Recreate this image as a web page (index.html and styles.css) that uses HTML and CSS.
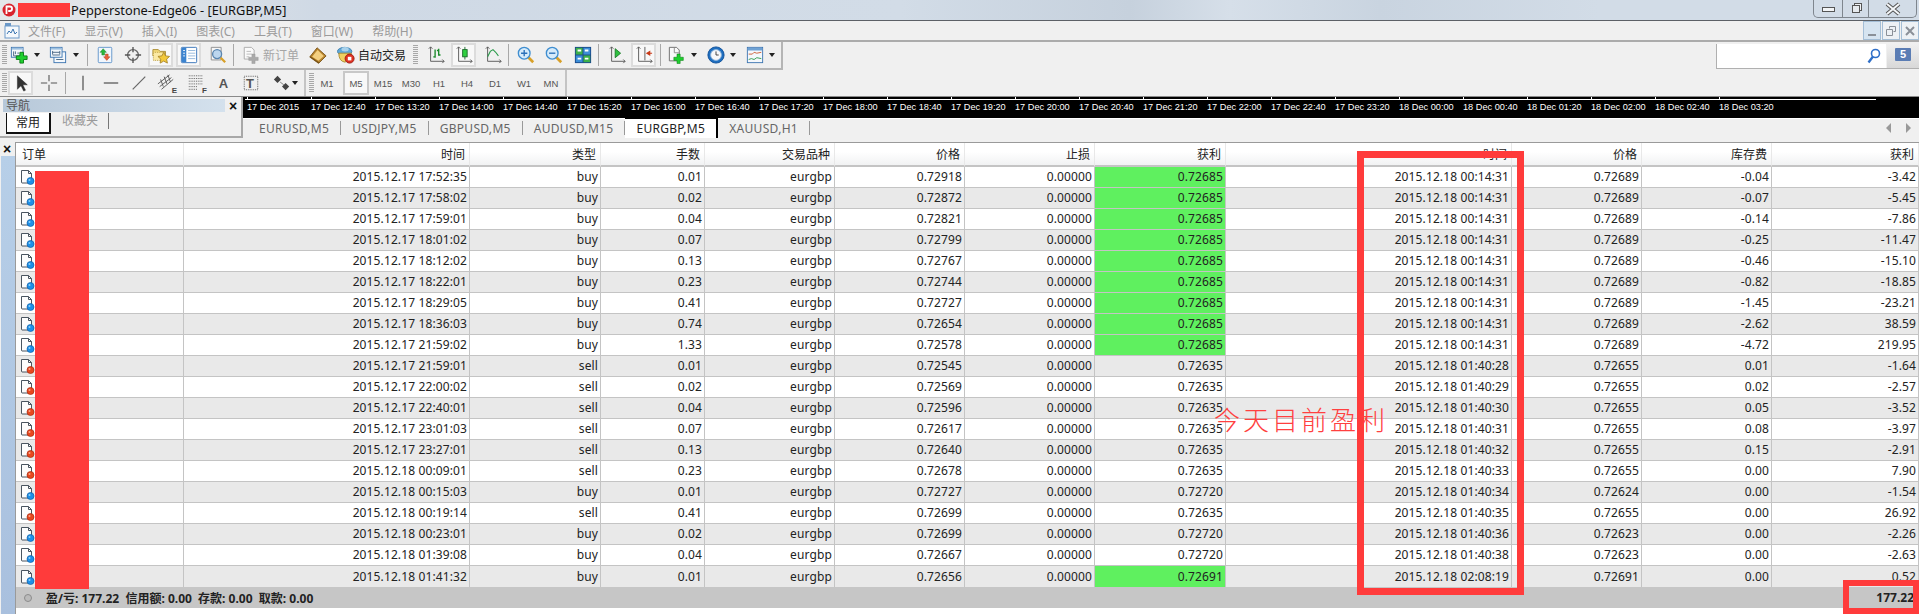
FILE: index.html
```html
<!DOCTYPE html>
<html lang="en">
<head>
    <meta charset="UTF-8">
    <meta name="viewport" content="width=device-width, initial-scale=1.0">
    <title>Pepperstone-Edge06 - [EURGBP,M5]</title>
    <link rel="stylesheet" href="styles.css">
</head>
<body>

    <svg class="sprites" xmlns="http://www.w3.org/2000/svg">
        <symbol id="i-newchart" viewBox="0 0 20 20">
            <rect x="1.500" y="1.500" width="13" height="11" fill="#f4f8fc" stroke="#3a74b0"/>
            <rect x="2" y="2" width="12" height="2" fill="#9cc0e0"/>
            <path d="M4 6v5h8M6 6v3M9 7v2" fill="none" stroke="#44617f"/>
            <path d="M11 7h4v4h4v4h-4v4h-4v-4H7v-4h4z" fill="#1fd02f" stroke="#0a7a14"/>
        </symbol>
        <symbol id="i-profile" viewBox="0 0 20 20">
            <rect x="5.500" y="6.500" width="13" height="12" fill="#f4f8fc" stroke="#3a74b0"/>
            <rect x="1.500" y="1.500" width="13" height="11" fill="#f4f8fc" stroke="#3a74b0"/>
            <rect x="2" y="2" width="12" height="2" fill="#9cc0e0"/>
            <path d="M4 7h8M4 10h8M8 15h8M4 5.500v4M12 5.500v4" fill="none" stroke="#44617f"/>
        </symbol>
        <symbol id="i-market" viewBox="0 0 20 20">
            <rect x="2.500" y="1.500" width="15" height="17" rx="1" fill="#f1f6fc" stroke="#5d92c9"/>
            <path d="M8 3l3.500 4H9.500v3h-3V7H4.500z" fill="#28b83a" stroke="#1a7a28" stroke-width=".5"/>
            <path d="M12 16l-3.500-4h2v-3h3v3h2z" fill="#e8603a" stroke="#a83a18" stroke-width=".5"/>
        </symbol>
        <symbol id="i-cross" viewBox="0 0 20 20">
            <circle cx="10" cy="10" r="6" fill="none" stroke="#666" stroke-width="1.500"/>
            <path d="M10 1v6M10 13v6M1 10h6M13 10h6" stroke="#555" stroke-width="1.500"/>
        </symbol>
        <symbol id="i-folder" viewBox="0 0 20 20">
            <path d="M1 4h6l2 2h6v5H1z" fill="#f3d97a" stroke="#a88a30"/>
            <path d="M1.500 7h13v9h-13z" fill="#fbe9a4" stroke="#b89a3a" stroke-dasharray="1 1"/>
            <path d="M13 7l2 4 4.500.6-3.300 3 .9 4.400-4.100-2.200-4 2.200.8-4.400-3.200-3 4.400-.6z" fill="#f3c93a" stroke="#a8862a"/>
        </symbol>
        <symbol id="i-term" viewBox="0 0 20 20">
            <rect x="1.500" y="1.500" width="17" height="17" rx="1" fill="#fff" stroke="#2f6db5"/>
            <rect x="2" y="2" width="5" height="16" fill="#3b84d0"/>
            <path d="M9 5h8M9 8h8M9 11h8M9 14h8" stroke="#8fb4da"/>
            <path d="M3.500 5h2M3.500 8h2M3.500 11h2" stroke="#fff"/>
        </symbol>
        <symbol id="i-tester" viewBox="0 0 20 20">
            <path d="M2.500 1.500h11v14h-11z" fill="#f6f6f6" stroke="#8a8a8a"/>
            <circle cx="9" cy="9" r="5" fill="#bcd6ee" stroke="#5a86b0" stroke-width="1.500"/>
            <path d="M13 13l5 5" stroke="#d8a028" stroke-width="2.500"/>
        </symbol>
        <symbol id="i-neworder" viewBox="0 0 20 20">
            <path d="M2.500 1.500h8l3 3v10h-11z" fill="#fafafa" stroke="#a8a8a8"/>
            <path d="M5 6h5M5 9h6M5 12h3" stroke="#b8b8b8"/>
            <path d="M11 9h3.500v3.500H18V16h-3.500v3.500H11V16H7.500v-3.500H11z" fill="#aaa" stroke="#999" stroke-width=".5"/>
        </symbol>
        <symbol id="i-gold" viewBox="0 0 20 20">
            <path d="M1 12L9 2l10 9-8 8z" fill="#b8842c" stroke="#7a5418"/>
            <path d="M3.500 12L9.500 4.500l7 6.500-6 5.500z" fill="#f3cf80"/>
            <path d="M1 12l10 7" stroke="#7a5418" stroke-width="1.500"/>
        </symbol>
        <symbol id="i-auto" viewBox="0 0 20 20">
            <ellipse cx="8.500" cy="6" rx="8" ry="4.500" fill="#5fa8d8" stroke="#3f7fae"/>
            <ellipse cx="9" cy="3.500" rx="4" ry="2.500" fill="#a9d2ec"/>
            <path d="M2 8q0 9 7 10l6-6 1-4z" fill="#f0d060" stroke="#a88a30"/>
            <circle cx="14" cy="14" r="5" fill="#e03020" stroke="#9a1a10"/>
            <rect x="12" y="12" width="4" height="4" fill="#fff"/>
        </symbol>
        <symbol id="i-bars" viewBox="0 0 20 20">
            <path d="M4 1v16h15M2 3l2-2 2 2M17 15l2 2-2 2" fill="none" stroke="#555"/>
            <path d="M9 4v9M7 12h2M13 3v7h2M13 5h-2" fill="none" stroke="#1a8a2a" stroke-width="1.500"/>
        </symbol>
        <symbol id="i-candle" viewBox="0 0 20 20">
            <path d="M4 1v16h15M2 3l2-2 2 2M17 15l2 2-2 2" fill="none" stroke="#555"/>
            <path d="M11 1v14" stroke="#1a6a2a"/>
            <rect x="8.500" y="4" width="5" height="8" fill="#2fd040" stroke="#1a6a2a"/>
        </symbol>
        <symbol id="i-line" viewBox="0 0 20 20">
            <path d="M4 1v16h15M2 3l2-2 2 2M17 15l2 2-2 2" fill="none" stroke="#555"/>
            <path d="M4 12l3-6 3-2 3 3 3 4" fill="none" stroke="#2a9a4a" stroke-width="1.200"/>
        </symbol>
        <symbol id="i-zoomin" viewBox="0 0 20 20">
            <path d="M12 12l6 6" stroke="#d8a028" stroke-width="3"/>
            <circle cx="8" cy="8" r="6.500" fill="#d6ebfa" stroke="#3f8ed0" stroke-width="1.500"/>
            <path d="M4.500 8h7M8 4.500v7" stroke="#2a70b8" stroke-width="1.500"/>
        </symbol>
        <symbol id="i-zoomout" viewBox="0 0 20 20">
            <path d="M12 12l6 6" stroke="#d8a028" stroke-width="3"/>
            <circle cx="8" cy="8" r="6.500" fill="#d6ebfa" stroke="#3f8ed0" stroke-width="1.500"/>
            <path d="M4.500 8h7" stroke="#2a70b8" stroke-width="1.500"/>
        </symbol>
        <symbol id="i-tile" viewBox="0 0 20 20">
            <rect x="1" y="1" width="18" height="18" fill="#1a4a8a"/>
            <rect x="2" y="2" width="7.500" height="7.500" fill="#3cb04a"/>
            <rect x="10.500" y="2" width="7.500" height="7.500" fill="#3c8ed8"/>
            <rect x="2" y="10.500" width="7.500" height="7.500" fill="#3c8ed8"/>
            <rect x="10.500" y="10.500" width="7.500" height="7.500" fill="#3cb04a"/>
            <path d="M4 5h4M12 5h4M4 14h4M12 14h4" stroke="#fff" stroke-width="2"/>
        </symbol>
        <symbol id="i-scroll" viewBox="0 0 20 20">
            <path d="M4 1v16h15M2 3l2-2 2 2M17 15l2 2-2 2" fill="none" stroke="#555"/>
            <path d="M8 3l6 5-6 5z" fill="#2fc040" stroke="#1a7a28"/>
        </symbol>
        <symbol id="i-shift" viewBox="0 0 20 20">
            <path d="M4 1v16h15M2 3l2-2 2 2M17 15l2 2-2 2M11 1v15" fill="none" stroke="#555"/>
            <path d="M12 8l5-3v2.500h2v1h-2V11z" fill="#c83a18"/>
        </symbol>
        <symbol id="i-template" viewBox="0 0 20 20">
            <path d="M1.500 1.500h8l3 3v12h-11z" fill="#fafafa" stroke="#666"/>
            <path d="M7 1.500v6h5" fill="none" stroke="#888"/>
            <path d="M10 9h3.500v3.500H17V16h-3.500v3.500H10V16H6.500v-3.500H10z" fill="#1fd02f" stroke="#0a7a14" stroke-width=".6"/>
        </symbol>
        <symbol id="i-clock" viewBox="0 0 20 20">
            <circle cx="10" cy="10" r="9" fill="#1f6fc0" stroke="#0f4f98"/>
            <circle cx="10" cy="10" r="6" fill="#f6f8fa" stroke="#8fb4da"/>
            <path d="M10 6v4h3" fill="none" stroke="#333"/>
        </symbol>
        <symbol id="i-ind" viewBox="0 0 20 20">
            <rect x="1.500" y="1.500" width="17" height="17" fill="#f4f8fc" stroke="#3a74b0"/>
            <rect x="2" y="2" width="16" height="3" fill="#6fa2d4"/>
            <path d="M3 9h4l2-2 3 1 5-1" fill="none" stroke="#c85a30"/>
            <path d="M3 15l3-1 3 1 3-2 5 1" fill="none" stroke="#2a9a4a"/>
        </symbol>
        <symbol id="i-arrow" viewBox="0 0 20 20">
            <path d="M6 2v15l4-4 3 6 2-1-3-6h5z" fill="#333" stroke="#222" stroke-width=".5"/>
        </symbol>
        <symbol id="i-plus" viewBox="0 0 20 20">
            <path d="M10 1v7M10 12v7M1 10h7M12 10h7" stroke="#555" stroke-width="1.200"/>
        </symbol>
        <symbol id="i-vline" viewBox="0 0 20 20"><path d="M10 2v16" stroke="#555" stroke-width="1.400"/></symbol>
        <symbol id="i-hline" viewBox="0 0 20 20"><path d="M2 10h16" stroke="#555" stroke-width="1.400"/></symbol>
        <symbol id="i-tline" viewBox="0 0 20 20"><path d="M3 17L17 3" stroke="#666" stroke-width="1.300"/></symbol>
        <symbol id="i-fibo" viewBox="0 0 20 20">
            <path d="M1 11L14 1M3 14L16 4M5 17L18 6M4 6l3 8M8 3l3 8M12 1l3 8" fill="none" stroke="#555"/>
        </symbol>
        <symbol id="i-fan" viewBox="0 0 20 20">
            <path d="M2 2h16M2 5h16M2 8h16M2 11h16M2 14h10M2 17h10" stroke="#555" stroke-dasharray="1 1"/>
        </symbol>
        <symbol id="i-label" viewBox="0 0 20 20">
            <rect x="2.500" y="2.500" width="15" height="15" fill="none" stroke="#555" stroke-dasharray="1 1"/>
        </symbol>
        <symbol id="i-arrows" viewBox="0 0 20 20">
            <path d="M5 2l4 4-4 4-4-4zM14 10l4 4-4 4-4-4z" fill="#444"/>
            <path d="M8 9l4 3" stroke="#777"/>
        </symbol>
        <symbol id="i-buy" viewBox="0 0 16 16">
            <path d="M2.500 1.500h7l3 3v8q0 1.500-1.500 1.500h-8q-.5 0-.5-1z" fill="#fdfdfd" stroke="#4a5560"/>
            <path d="M9.500 1.500v3h3" fill="none" stroke="#4a5560"/>
            <circle cx="11.500" cy="12" r="3.500" fill="#1e90e8" stroke="#0f5fa8" stroke-width=".7"/>
            <circle cx="10.500" cy="11" r="1" fill="#8fd0f8"/>
        </symbol>
        <symbol id="i-sell" viewBox="0 0 16 16">
            <path d="M2.500 1.500h7l3 3v8q0 1.500-1.500 1.500h-8q-.5 0-.5-1z" fill="#fdfdfd" stroke="#4a5560"/>
            <path d="M9.500 1.500v3h3" fill="none" stroke="#4a5560"/>
            <circle cx="11.500" cy="12" r="3.500" fill="#e8481e" stroke="#a82a0f" stroke-width=".7"/>
            <circle cx="10.500" cy="11" r="1" fill="#f8a88f"/>
        </symbol>
    </svg>

    <header class="titlebar">
        <svg class="logo" viewBox="0 0 14 14"><circle cx="7" cy="7" r="6.500" fill="#d9232e"/><path d="M4.500 11V3.500h3.300a2.200 2.200 0 0 1 0 4.500H6.200" fill="none" stroke="#fff" stroke-width="1.800"/></svg>
        <span class="title-mask"></span>
        <span class="title-text">Pepperstone-Edge06 - [EURGBP,M5]</span>
        <div class="win-buttons">
            <span class="win-btn win-min"><i></i></span>
            <span class="win-btn win-restore"><i></i></span>
            <span class="win-btn win-close">
                <svg viewBox="0 0 20 14" width="20" height="14"><path d="M4 2l12 10M16 2L4 12" stroke="#555" stroke-width="4"/><path d="M4 2l12 10M16 2L4 12" stroke="#f4f6f8" stroke-width="2"/></svg>
            </span>
        </div>
    </header>

    <nav class="menubar">
        <svg class="menu-icon" viewBox="0 0 16 16"><rect x="1" y="3" width="14" height="12" fill="#f4f8fc" stroke="#6a98c8"/><rect x="1" y="0" width="6" height="3" fill="#6a98c8"/><path d="M3 11l2-3 2 2 2-4 2 5 2-2" fill="none" stroke="#3a74b0"/></svg>
        <span>文件(F)</span>
        <span>显示(V)</span>
        <span>插入(I)</span>
        <span>图表(C)</span>
        <span>工具(T)</span>
        <span>窗口(W)</span>
        <span>帮助(H)</span>
        <div class="mdi-buttons">
            <span class="mdi-btn"><svg viewBox="0 0 12 12" width="12" height="12"><path d="M2 10h8" stroke="#8a9098" stroke-width="2"/></svg></span>
            <span class="mdi-btn"><svg viewBox="0 0 12 12" width="12" height="12"><path d="M4.500 3.500V1.500h6v5h-2M1.500 4.500h6v6h-6z" fill="none" stroke="#8a9098"/></svg></span>
            <span class="mdi-btn"><svg viewBox="0 0 12 12" width="12" height="12"><path d="M2 2l8 8M10 2l-8 8" stroke="#8a9098" stroke-width="2"/></svg></span>
        </div>
    </nav>

    <div class="toolbars">
        <div class="toolbar-rows">
            <div class="toolbar toolbar-main">
                <span class="grip ml2"></span>
                <span class="tool w22 ml1"><svg class="ico"><use href="#i-newchart"/></svg></span>
                <span class="caret ml4"></span>
                <span class="tool w22 ml7"><svg class="ico"><use href="#i-profile"/></svg></span>
                <span class="caret ml4"></span>
                <span class="sep ml8"></span>
                <span class="tool ml4"><svg class="ico"><use href="#i-market"/></svg></span>
                <span class="tool ml3"><svg class="ico"><use href="#i-cross"/></svg></span>
                <span class="tool hot ml3"><svg class="ico"><use href="#i-folder"/></svg></span>
                <span class="tool hot ml3"><svg class="ico"><use href="#i-term"/></svg></span>
                <span class="tool ml4"><svg class="ico"><use href="#i-tester"/></svg></span>
                <span class="sep ml3"></span>
                <span class="tool-text disabled ml8"><svg class="ico"><use href="#i-neworder"/></svg>新订单</span>
                <span class="tool ml6"><svg class="ico"><use href="#i-gold"/></svg></span>
                <span class="tool-text ml7"><svg class="ico"><use href="#i-auto"/></svg>自动交易</span>
                <span class="grip ml7"></span>
                <span class="tool ml5"><svg class="ico"><use href="#i-bars"/></svg></span>
                <span class="tool hot ml3"><svg class="ico"><use href="#i-candle"/></svg></span>
                <span class="tool ml4"><svg class="ico"><use href="#i-line"/></svg></span>
                <span class="sep ml3"></span>
                <span class="tool ml4"><svg class="ico"><use href="#i-zoomin"/></svg></span>
                <span class="tool ml3"><svg class="ico"><use href="#i-zoomout"/></svg></span>
                <span class="tool ml4"><svg class="ico"><use href="#i-tile"/></svg></span>
                <span class="sep ml3"></span>
                <span class="tool ml5"><svg class="ico"><use href="#i-scroll"/></svg></span>
                <span class="tool hot ml2"><svg class="ico"><use href="#i-shift"/></svg></span>
                <span class="sep ml4"></span>
                <span class="tool w22 ml5"><svg class="ico"><use href="#i-template"/></svg></span>
                <span class="caret ml3"></span>
                <span class="tool w22 ml8"><svg class="ico"><use href="#i-clock"/></svg></span>
                <span class="caret ml3"></span>
                <span class="tool w22 ml8"><svg class="ico"><use href="#i-ind"/></svg></span>
                <span class="caret ml3"></span>
            </div>
            <div class="toolbar toolbar-draw">
                <span class="grip ml2"></span>
                <span class="tool hot ml1"><svg class="ico"><use href="#i-arrow"/></svg></span>
                <span class="tool ml3"><svg class="ico"><use href="#i-plus"/></svg></span>
                <span class="sep ml4"></span>
                <span class="tool ml4"><svg class="ico"><use href="#i-vline"/></svg></span>
                <span class="tool ml3"><svg class="ico"><use href="#i-hline"/></svg></span>
                <span class="tool ml3"><svg class="ico"><use href="#i-tline"/></svg></span>
                <span class="tool sub ml2"><svg class="ico"><use href="#i-fibo"/></svg><b>E</b></span>
                <span class="tool sub ml5"><svg class="ico"><use href="#i-fan"/></svg><b>F</b></span>
                <span class="tool glyph ml3">A</span>
                <span class="tool glyph boxed ml2"><svg class="ico"><use href="#i-label"/></svg><b>T</b></span>
                <span class="tool w20 ml9"><svg class="ico"><use href="#i-arrows"/></svg></span>
                <span class="caret"></span>
                <span class="bar-end ml6"></span>
                <span class="grip ml3"></span>
                <span class="tf">M1</span>
                <span class="tf hot ml3">M5</span>
                <span class="tf ml1">M15</span>
                <span class="tf ml2">M30</span>
                <span class="tf ml2">H1</span>
                <span class="tf ml2">H4</span>
                <span class="tf ml2">D1</span>
                <span class="tf ml3">W1</span>
                <span class="tf ml1">MN</span>
            </div>
        </div>
        <div class="search-area">
            <div class="search-box">
                <svg viewBox="0 0 14 16" width="14" height="16"><circle cx="8.500" cy="5.500" r="4" fill="#fff" stroke="#2f6fc8" stroke-width="1.600"/><path d="M6 8.500l-4.500 6" stroke="#2f6fc8" stroke-width="2.400"/></svg>
            </div>
            <div class="notify"><span class="notify-count">5</span></div>
        </div>
    </div>

    <div class="top-row">
        <aside class="nav-panel">
            <div class="nav-head">
                <span class="nav-title">导航</span>
                <span class="close-x">×</span>
            </div>
            <div class="nav-tabs">
                <span class="nav-tab active">常用</span>
                <span class="nav-tab">收藏夹</span>
            </div>
        </aside>
        <div class="chart-col">
            <div class="axis">
                <div class="axis-line"></div>
                <div class="axis-labels">
                    <span>17 Dec 2015</span><span>17 Dec 12:40</span><span>17 Dec 13:20</span><span>17 Dec 14:00</span><span>17 Dec 14:40</span><span>17 Dec 15:20</span><span>17 Dec 16:00</span><span>17 Dec 16:40</span><span>17 Dec 17:20</span><span>17 Dec 18:00</span><span>17 Dec 18:40</span><span>17 Dec 19:20</span><span>17 Dec 20:00</span><span>17 Dec 20:40</span><span>17 Dec 21:20</span><span>17 Dec 22:00</span><span>17 Dec 22:40</span><span>17 Dec 23:20</span><span>18 Dec 00:00</span><span>18 Dec 00:40</span><span>18 Dec 01:20</span><span>18 Dec 02:00</span><span>18 Dec 02:40</span><span>18 Dec 03:20</span>
                </div>
            </div>
            <div class="chart-tabs">
                <span class="chart-tab">EURUSD,M5</span>
                <span class="chart-tab">USDJPY,M5</span>
                <span class="chart-tab">GBPUSD,M5</span>
                <span class="chart-tab">AUDUSD,M15</span>
                <span class="chart-tab active">EURGBP,M5</span>
                <span class="chart-tab">XAUUSD,H1</span>
                <span class="tab-arrows">
                    <svg viewBox="0 0 6 10" width="6" height="10"><path d="M5 0v10L0 5z" fill="#999"/></svg>
                    <svg viewBox="0 0 6 10" width="6" height="10"><path d="M1 0v10l5-5z" fill="#999"/></svg>
                </span>
            </div>
        </div>
    </div>

    <section class="terminal">
        <div class="term-side">
            <span class="close-x">×</span>
            <div class="term-strip"></div>
        </div>
        <div class="term-main">
            <table class="orders">
                <colgroup>
                    <col class="c-order"><col class="c-time"><col class="c-a"><col class="c-b"><col class="c-c"><col class="c-c"><col class="c-c"><col class="c-a"><col class="c-time"><col class="c-c"><col class="c-c"><col>
                </colgroup>
                <thead>
                    <tr><th class="left">订单</th><th>时间</th><th>类型</th><th>手数</th><th>交易品种</th><th>价格</th><th>止损</th><th>获利</th><th>时间</th><th>价格</th><th>库存费</th><th>获利</th></tr>
                </thead>
                <tbody>
                    <tr><td class="left"><svg class="row-ico"><use href="#i-buy"/></svg></td><td>2015.12.17 17:52:35</td><td>buy</td><td>0.01</td><td>eurgbp</td><td>0.72918</td><td>0.00000</td><td class="hit">0.72685</td><td>2015.12.18 00:14:31</td><td>0.72689</td><td>-0.04</td><td>-3.42</td></tr>
                    <tr><td class="left"><svg class="row-ico"><use href="#i-buy"/></svg></td><td>2015.12.17 17:58:02</td><td>buy</td><td>0.02</td><td>eurgbp</td><td>0.72872</td><td>0.00000</td><td class="hit">0.72685</td><td>2015.12.18 00:14:31</td><td>0.72689</td><td>-0.07</td><td>-5.45</td></tr>
                    <tr><td class="left"><svg class="row-ico"><use href="#i-buy"/></svg></td><td>2015.12.17 17:59:01</td><td>buy</td><td>0.04</td><td>eurgbp</td><td>0.72821</td><td>0.00000</td><td class="hit">0.72685</td><td>2015.12.18 00:14:31</td><td>0.72689</td><td>-0.14</td><td>-7.86</td></tr>
                    <tr><td class="left"><svg class="row-ico"><use href="#i-buy"/></svg></td><td>2015.12.17 18:01:02</td><td>buy</td><td>0.07</td><td>eurgbp</td><td>0.72799</td><td>0.00000</td><td class="hit">0.72685</td><td>2015.12.18 00:14:31</td><td>0.72689</td><td>-0.25</td><td>-11.47</td></tr>
                    <tr><td class="left"><svg class="row-ico"><use href="#i-buy"/></svg></td><td>2015.12.17 18:12:02</td><td>buy</td><td>0.13</td><td>eurgbp</td><td>0.72767</td><td>0.00000</td><td class="hit">0.72685</td><td>2015.12.18 00:14:31</td><td>0.72689</td><td>-0.46</td><td>-15.10</td></tr>
                    <tr><td class="left"><svg class="row-ico"><use href="#i-buy"/></svg></td><td>2015.12.17 18:22:01</td><td>buy</td><td>0.23</td><td>eurgbp</td><td>0.72744</td><td>0.00000</td><td class="hit">0.72685</td><td>2015.12.18 00:14:31</td><td>0.72689</td><td>-0.82</td><td>-18.85</td></tr>
                    <tr><td class="left"><svg class="row-ico"><use href="#i-buy"/></svg></td><td>2015.12.17 18:29:05</td><td>buy</td><td>0.41</td><td>eurgbp</td><td>0.72727</td><td>0.00000</td><td class="hit">0.72685</td><td>2015.12.18 00:14:31</td><td>0.72689</td><td>-1.45</td><td>-23.21</td></tr>
                    <tr><td class="left"><svg class="row-ico"><use href="#i-buy"/></svg></td><td>2015.12.17 18:36:03</td><td>buy</td><td>0.74</td><td>eurgbp</td><td>0.72654</td><td>0.00000</td><td class="hit">0.72685</td><td>2015.12.18 00:14:31</td><td>0.72689</td><td>-2.62</td><td>38.59</td></tr>
                    <tr><td class="left"><svg class="row-ico"><use href="#i-buy"/></svg></td><td>2015.12.17 21:59:02</td><td>buy</td><td>1.33</td><td>eurgbp</td><td>0.72578</td><td>0.00000</td><td class="hit">0.72685</td><td>2015.12.18 00:14:31</td><td>0.72689</td><td>-4.72</td><td>219.95</td></tr>
                    <tr><td class="left"><svg class="row-ico"><use href="#i-sell"/></svg></td><td>2015.12.17 21:59:01</td><td>sell</td><td>0.01</td><td>eurgbp</td><td>0.72545</td><td>0.00000</td><td>0.72635</td><td>2015.12.18 01:40:28</td><td>0.72655</td><td>0.01</td><td>-1.64</td></tr>
                    <tr><td class="left"><svg class="row-ico"><use href="#i-sell"/></svg></td><td>2015.12.17 22:00:02</td><td>sell</td><td>0.02</td><td>eurgbp</td><td>0.72569</td><td>0.00000</td><td>0.72635</td><td>2015.12.18 01:40:29</td><td>0.72655</td><td>0.02</td><td>-2.57</td></tr>
                    <tr><td class="left"><svg class="row-ico"><use href="#i-sell"/></svg></td><td>2015.12.17 22:40:01</td><td>sell</td><td>0.04</td><td>eurgbp</td><td>0.72596</td><td>0.00000</td><td>0.72635</td><td>2015.12.18 01:40:30</td><td>0.72655</td><td>0.05</td><td>-3.52</td></tr>
                    <tr><td class="left"><svg class="row-ico"><use href="#i-sell"/></svg></td><td>2015.12.17 23:01:03</td><td>sell</td><td>0.07</td><td>eurgbp</td><td>0.72617</td><td>0.00000</td><td>0.72635</td><td>2015.12.18 01:40:31</td><td>0.72655</td><td>0.08</td><td>-3.97</td></tr>
                    <tr><td class="left"><svg class="row-ico"><use href="#i-sell"/></svg></td><td>2015.12.17 23:27:01</td><td>sell</td><td>0.13</td><td>eurgbp</td><td>0.72640</td><td>0.00000</td><td>0.72635</td><td>2015.12.18 01:40:32</td><td>0.72655</td><td>0.15</td><td>-2.91</td></tr>
                    <tr><td class="left"><svg class="row-ico"><use href="#i-sell"/></svg></td><td>2015.12.18 00:09:01</td><td>sell</td><td>0.23</td><td>eurgbp</td><td>0.72678</td><td>0.00000</td><td>0.72635</td><td>2015.12.18 01:40:33</td><td>0.72655</td><td>0.00</td><td>7.90</td></tr>
                    <tr><td class="left"><svg class="row-ico"><use href="#i-buy"/></svg></td><td>2015.12.18 00:15:03</td><td>buy</td><td>0.01</td><td>eurgbp</td><td>0.72727</td><td>0.00000</td><td>0.72720</td><td>2015.12.18 01:40:34</td><td>0.72624</td><td>0.00</td><td>-1.54</td></tr>
                    <tr><td class="left"><svg class="row-ico"><use href="#i-sell"/></svg></td><td>2015.12.18 00:19:14</td><td>sell</td><td>0.41</td><td>eurgbp</td><td>0.72699</td><td>0.00000</td><td>0.72635</td><td>2015.12.18 01:40:35</td><td>0.72655</td><td>0.00</td><td>26.92</td></tr>
                    <tr><td class="left"><svg class="row-ico"><use href="#i-buy"/></svg></td><td>2015.12.18 00:23:01</td><td>buy</td><td>0.02</td><td>eurgbp</td><td>0.72699</td><td>0.00000</td><td>0.72720</td><td>2015.12.18 01:40:36</td><td>0.72623</td><td>0.00</td><td>-2.26</td></tr>
                    <tr><td class="left"><svg class="row-ico"><use href="#i-buy"/></svg></td><td>2015.12.18 01:39:08</td><td>buy</td><td>0.04</td><td>eurgbp</td><td>0.72667</td><td>0.00000</td><td>0.72720</td><td>2015.12.18 01:40:38</td><td>0.72623</td><td>0.00</td><td>-2.63</td></tr>
                    <tr><td class="left"><svg class="row-ico"><use href="#i-buy"/></svg></td><td>2015.12.18 01:41:32</td><td>buy</td><td>0.01</td><td>eurgbp</td><td>0.72656</td><td>0.00000</td><td class="hit">0.72691</td><td>2015.12.18 02:08:19</td><td>0.72691</td><td>0.00</td><td>0.52</td></tr>
                </tbody>
            </table>
            <div class="summary">
                <span class="summary-dot"></span>
                <span class="summary-text">盈/亏: 177.22&nbsp;&nbsp;信用额: 0.00&nbsp;&nbsp;存款: 0.00&nbsp;&nbsp;取款: 0.00</span>
                <span class="summary-total">177.22</span>
            </div>
        </div>
    </section>

    <!-- markup drawn over the screenshot -->
    <div class="mask-account"></div>
    <div class="mark-times"></div>
    <div class="mark-total"></div>
    <div class="mark-note">今天目前盈利</div>

</body>
</html>
```

FILE: styles.css
```css
html, body {
    margin: 0;
    padding: 0;
}

body {
    position: relative;
    width: 1919px;
    height: 614px;
    overflow: hidden;
    background: #f0f0f0;
    color: #222;
    font-family: "Noto Sans", "Noto Sans CJK SC", sans-serif;
    font-size: 12px;
}

.sprites {
    display: none;
}

/* title bar */
.titlebar {
    display: flex;
    align-items: center;
    height: 20px;
    border-bottom: 1px solid #5c6066;
    background: linear-gradient(90deg, #e4e7ea 0, #dfe3e7 150px, #cfd9e5 320px, #d2dce7 900px, #c6d1dd 1130px, #d6dfe9 1230px, #c9d4e0 1380px, #d2dce7 1600px, #d2dce7 100%);
}

.logo {
    width: 14px;
    height: 14px;
    margin-left: 2px;
}

.title-mask {
    width: 52px;
    height: 14px;
    margin-left: 2px;
    background: #ff3b3b;
}

.title-text {
    margin-left: 1px;
    font-size: 12.800px;
    color: #111;
}

.win-buttons {
    display: flex;
    align-self: flex-start;
    height: 17px;
    margin-left: auto;
    margin-right: 2px;
    border: 1px solid #7f868e;
    border-top: none;
    border-radius: 0 0 5px 5px;
}

.win-btn {
    display: flex;
    align-items: center;
    justify-content: center;
    border-right: 1px solid #7f868e;
}

.win-min {
    width: 28px;
}

.win-min i {
    display: block;
    width: 11px;
    height: 3px;
    margin-top: 2px;
    border: 1px solid #555;
    background: #f2f4f6;
}

.win-restore {
    width: 25px;
}

.win-restore i {
    display: block;
    width: 6px;
    height: 6px;
    border: 1px solid #555;
    box-shadow: 2px -2px 0 -1px #f0f2f4, 2px -2px 0 0 #555;
    background: #e6eaee;
}

.win-close {
    width: 47px;
    border-right: none;
}

/* menu */
.menubar {
    display: flex;
    align-items: center;
    gap: 19px;
    height: 19px;
    border-bottom: 2px solid #ababab;
    color: #9b9b9b;
}

.menu-icon {
    width: 16px;
    height: 16px;
    margin: 0 -11px 0 4px;
}

.mdi-buttons {
    display: flex;
    gap: 1px;
    margin-left: auto;
}

.mdi-btn {
    display: flex;
    align-items: center;
    justify-content: center;
    width: 16px;
    height: 17px;
    border: 1px solid #a4bed6;
    background: #d6e4f0;
}

.mdi-btn + .mdi-btn {
    background: #edf1f5;
}

/* toolbars */
.toolbars {
    display: flex;
    justify-content: space-between;
    height: 54px;
    border-bottom: 1px solid #8a8a8a;
}

.toolbar {
    display: flex;
    align-items: center;
}

.toolbar-main {
    width: 781px;
    height: 26px;
    border-right: 2px solid #b5b5b5;
    border-bottom: 2px solid #b5b5b5;
}

.toolbar-draw {
    width: 565px;
    height: 26px;
    border-right: 2px solid #c4c4c4;
}

.grip {
    flex: none;
    width: 5px;
    height: 20px;
    background: repeating-linear-gradient(180deg, #a8a8a8 0, #a8a8a8 1px, transparent 1px, transparent 2px);
}

.tool {
    position: relative;
    flex: none;
    display: flex;
    align-items: center;
    justify-content: center;
    box-sizing: border-box;
    width: 25px;
    height: 24px;
}

.w22 {
    width: 22px;
}

.w20 {
    width: 20px;
}

.ico {
    flex: none;
    width: 18px;
    height: 18px;
}

.hot {
    border: 2px solid #dcdcdc;
    background: #f8f8f8;
}

.caret {
    flex: none;
    width: 0;
    height: 0;
    box-sizing: content-box;
    border-top: 4px solid #222;
    border-left: 3px solid transparent;
    border-right: 3px solid transparent;
}

.sep {
    flex: none;
    width: 1px;
    height: 22px;
    background: #a8a8a8;
}

.bar-end {
    flex: none;
    width: 2px;
    height: 26px;
    background: #c4c4c4;
}

.tool-text {
    flex: none;
    display: flex;
    align-items: center;
    gap: 3px;
    font-size: 12px;
    color: #222;
}

.tool-text.disabled {
    color: #a5a5a5;
}

.sub b {
    position: absolute;
    right: 1px;
    bottom: 0;
    font: bold 8px "Liberation Sans", sans-serif;
    color: #444;
}

.glyph {
    font: bold 13px "Liberation Sans", sans-serif;
    color: #555;
}

.boxed b {
    position: absolute;
    left: 8px;
    top: 5px;
    font-size: 13px;
}

.tf {
    flex: none;
    display: flex;
    align-items: center;
    justify-content: center;
    box-sizing: border-box;
    width: 26px;
    height: 24px;
    font: 9.500px "Liberation Sans", sans-serif;
    color: #555;
}

.tf.hot {
    border-color: #c8c8c8;
}

.ml1 { margin-left: 1px; }
.ml2 { margin-left: 2px; }
.ml3 { margin-left: 3px; }
.ml4 { margin-left: 4px; }
.ml5 { margin-left: 5px; }
.ml6 { margin-left: 6px; }
.ml7 { margin-left: 7px; }
.ml8 { margin-left: 8px; }
.ml9 { margin-left: 9px; }

.search-area {
    display: flex;
    height: 24px;
    margin-top: 2px;
    border-bottom: 1px solid #b0b0b0;
}

.search-box {
    display: flex;
    align-items: center;
    justify-content: flex-end;
    box-sizing: border-box;
    width: 170px;
    padding-right: 5px;
    border-left: 1px solid #b0b0b0;
    background: #fff;
}

.notify {
    display: flex;
    justify-content: center;
    width: 32px;
    margin-left: 1px;
    background: linear-gradient(180deg, #f0f0f0, #d8d8d8);
}

.notify-count {
    width: 16px;
    height: 13px;
    margin-top: 4px;
    border-radius: 1px;
    background: #5b7db4;
    color: #fff;
    font: bold 11px/13px "Liberation Sans", sans-serif;
    text-align: center;
}

/* navigator + chart strip */
.top-row {
    display: flex;
    height: 41px;
}

.nav-panel {
    flex: none;
    box-sizing: border-box;
    width: 243px;
    border-right: 2px solid #a8a8a8;
    border-bottom: 2px solid #a8a8a8;
}

.nav-head {
    display: flex;
    align-items: center;
    height: 15px;
    padding: 1px 0 0 3px;
}

.nav-title {
    flex: 1;
    height: 13px;
    padding-left: 3px;
    background: linear-gradient(90deg, #b7c8d9, #d4e1ed);
    font-size: 12px;
    line-height: 13px;
    color: #555;
}

.close-x {
    display: block;
    width: 14px;
    font: bold 14px/12px "Liberation Sans", sans-serif;
    color: #111;
    text-align: center;
}

.nav-head .close-x {
    margin: 0 1px;
}

.nav-tabs {
    display: flex;
    align-items: flex-start;
    padding-left: 6px;
}

.nav-tab {
    padding: 0 10px;
    border-right: 1px solid #777;
    font-size: 12px;
    line-height: 16px;
    color: #9a9a9a;
    white-space: nowrap;
}

.nav-tab.active {
    margin-right: 1px;
    padding: 0 9px;
    border: 1px solid #111;
    border-top: none;
    border-bottom-width: 2px;
    border-right-width: 2px;
    background: #fff;
    color: #222;
    line-height: 19px;
}

.chart-col {
    flex: 1;
    min-width: 0;
}

.axis {
    height: 20px;
    box-sizing: border-box;
    padding: 2px 0 0 2px;
    background: #000;
}

.axis-line {
    width: 1631px;
    height: 1px;
    background: #fff;
}

.axis-labels {
    display: flex;
    padding-left: 2px;
}

.axis-labels span {
    position: relative;
    flex: none;
    width: 64px;
    font: 9.200px/15px "Liberation Sans", sans-serif;
    color: #fff;
    white-space: nowrap;
}

.axis-labels span::before {
    content: "";
    position: absolute;
    left: 0;
    top: -3px;
    width: 1px;
    height: 3px;
    background: #fff;
}

.chart-tabs {
    display: flex;
    align-items: stretch;
    box-sizing: border-box;
    height: 21px;
    padding-left: 5px;
    border-top: 1px solid #000;
    box-shadow: inset 0 1px 0 #fff;
}

.chart-tab {
    display: flex;
    align-items: center;
    padding: 0 11px;
    margin: 3px 0;
    border-right: 1px solid #999;
    font-size: 12px;
    letter-spacing: .3px;
    color: #666;
}

.chart-tab.active {
    margin: 0;
    padding: 0 11px;
    border-right: 2px solid #000;
    border-top: 1px solid #000;
    background: #fff;
    color: #222;
}

.tab-arrows {
    display: flex;
    align-items: center;
    gap: 13px;
    margin-left: auto;
    margin-right: 8px;
}

/* terminal */
.terminal {
    display: flex;
    height: 476px;
    padding-top: 4px;
    box-sizing: border-box;
}

.term-side {
    display: flex;
    flex-direction: column;
    flex: none;
    width: 15px;
}

.term-side .close-x {
    height: 14px;
    line-height: 14px;
}

.term-strip {
    flex: 1;
    margin-left: 1px;
    background: linear-gradient(180deg, #b7cfe8, #a9c0de);
}

.term-main {
    flex: 1;
    box-sizing: border-box;
    border-top: 1px solid #9a9a9a;
    border-left: 1px solid #9a9a9a;
    background: #fff;
}

.orders {
    width: 1903px;
    table-layout: fixed;
    border-collapse: separate;
    border-spacing: 0;
}

.c-order { width: 168px; }
.c-time { width: 286px; }
.c-a { width: 131px; }
.c-b { width: 104px; }
.c-c { width: 130px; }

.orders th {
    box-sizing: border-box;
    height: 24px;
    padding: 0 4px 0 0;
    border-right: 1px solid #e8e8e8;
    border-bottom: 2px solid #c4c4c4;
    background: linear-gradient(180deg, #fff 40%, #f1f2f3);
    font-weight: normal;
    font-size: 12px;
    text-align: right;
}

.orders td {
    box-sizing: border-box;
    height: 21px;
    padding: 0 2px 0 0;
    border-right: 1px solid #c4c4c4;
    border-bottom: 1px solid #c4c4c4;
    line-height: 20px;
    letter-spacing: .12px;
    text-align: right;
    white-space: nowrap;
    overflow: hidden;
}

.orders tbody tr:nth-child(even) td {
    background: #e9e9e9;
}

.orders tbody tr td.hit {
    background: #5ff05f;
}

.orders tr:last-child td {
    border-bottom: none;
}

.orders .left {
    padding-left: 6px;
    text-align: left;
}

.row-ico {
    display: block;
    width: 16px;
    height: 16px;
    margin-left: -3px;
}

.summary {
    display: flex;
    align-items: center;
    height: 21px;
    background: #c6c6c6;
    font-weight: bold;
    color: #222;
}

.summary-dot {
    width: 6px;
    height: 6px;
    margin-left: 8px;
    border: 1px solid #8c8c8c;
    border-radius: 50%;
    background: #bbb;
}

.summary-text {
    margin-left: 14px;
}

.summary-total {
    margin-left: auto;
    margin-right: 5px;
}

/* annotations */
.mask-account {
    position: absolute;
    left: 35px;
    top: 171px;
    width: 54px;
    height: 418px;
    background: #ff3b3b;
}

.mark-times {
    position: absolute;
    left: 1357px;
    top: 151px;
    box-sizing: border-box;
    width: 167px;
    height: 444px;
    border: 7px solid #ff3b3b;
}

.mark-total {
    position: absolute;
    left: 1843px;
    top: 580px;
    box-sizing: border-box;
    width: 76px;
    height: 34px;
    border: 6px solid #ff3b3b;
}

.mark-note {
    position: absolute;
    left: 1214px;
    top: 401px;
    font-size: 26px;
    font-weight: 300;
    line-height: 38px;
    letter-spacing: 3px;
    color: #ff4040;
    white-space: nowrap;
}
```
